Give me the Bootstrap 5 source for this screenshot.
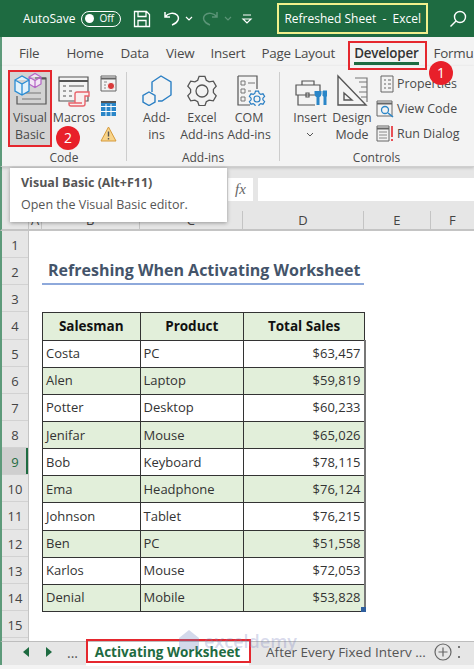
<!DOCTYPE html>
<html lang="en">
<head>
    <meta charset="UTF-8">
    <meta name="viewport" content="width=device-width, initial-scale=1.0">
    <title>Refreshed Sheet - Excel</title>
    <link href="https://cdn.jsdelivr.net/npm/bootstrap@5.3.0/dist/css/bootstrap.min.css" rel="stylesheet">
    <style>
        html, body { margin: 0; height: 669px; overflow: hidden; background: #fff; }
        body { font-family: "Open Sans", "Noto Sans", sans-serif; color: #444; width: 474px; position: relative; }
        .titlebar { height: 37px; background: #1e6b41; color: #fff; font-size: 12px; padding-left: 23px; overflow: hidden; }
        .toggle-off { width: 40px; height: 16px; border: 1.5px solid #fff; border-radius: 9px; font-size: 10px; padding-left: 3px; margin-left: 6px; }
        .toggle-off i { width: 9px; height: 9px; border-radius: 50%; background: #fff; margin-right: 5px; }
        .qat-save { margin-left: 12px; }
        .qat-undo { margin-left: 12px; }
        .doc-name { width: 151px; height: 31px; margin-left: 24px; border: 2px solid #f1f08c; padding-left: 5px; white-space: pre; font-size: 12px; }
        .search-ico { margin-left: 21px; }
        .tabstrip { height: 29px; background: #f3f3f3; font-size: 13.4px; letter-spacing: -.2px; color: #4a4a4a; padding: 3px 0 0 17px; border-left: 2px solid #5d9a7a; position: relative; overflow: hidden; }
        .tabstrip span { white-space: nowrap; }
        .tab-dev { font-weight: 600; color: #333; position: relative; height: 26px; line-height: 26px; }
        .tab-dev::after { content: ""; position: absolute; left: 0; right: 0; bottom: 1px; height: 3px; background: #1e6b41; }
        .ribbon { height: 101px; background: #f3f3f3; border-left: 2px solid #5d9a7a; border-bottom: 1px solid #cfcfcf; box-shadow: 0 1px 3px rgba(0,0,0,.18); font-size: 12.4px; line-height: 17px; color: #4a4a4a; position: relative; z-index: 2; }
        .rib-group { border-right: 1px solid #cdcdcd; margin: 6px 0 5px; padding: 0; }
        .group-code { width: 125px; }
        .group-addins { width: 153px; }
        .group-controls { width: 193px; border-right: 0; }
        .rib-items { flex: 1; min-height: 0; }
        .rib-label { text-align: center; font-size: 12px; line-height: 16px; margin-bottom: -5px; }
        .rib-btn { text-align: center; white-space: nowrap; }
        .rib-btn svg { display: block; margin: 0 auto 2.5px; }
        .btn-vb { width: 40px; margin: -2px 0 0 8px; padding-top: 2px; height: 75px; background: #d3d3d3; }
        .btn-macros { width: 48px; }
        .btn-macros svg { margin-bottom: .5px; }
        .rib-small { width: 20px; margin-left: 2px; gap: 9px; padding-top: 3px; }
        .btn-addins { width: 46px; margin-left: 6px; padding-left: 1px; }
        .btn-excel { width: 46px; }
        .btn-com { width: 47px; padding-left: 1px; }
        .btn-insert { width: 42px; margin-left: 9px; }
        .btn-design { width: 42px; }
        .rib-list { margin-left: 3px; gap: 2px; }
        .rib-list div { height: 23px; white-space: nowrap; }
        .rib-list svg { margin-right: 3px; }
        .formula-bar { height: 44px; background: #e6e6e6; border-left: 2px solid #5d9a7a; padding: 11px 0 0 226px; }
        .fx-box { width: 25px; height: 23px; background: #fff; font-family: "Liberation Serif", serif; font-style: italic; color: #666; font-size: 15px; line-height: 22px; text-align: center; }
        .fx-input { flex: 1; height: 23px; background: #fff; margin-left: 5px; }
        .col-heads { height: 20px; background: #e6e6e6; border-bottom: 2px solid #c4c4c4; border-left: 2px solid #5d9a7a; font-size: 13px; line-height: 18px; }
        .col-heads div { border-right: 1px solid #c4c4c4; text-align: center; }
        .col-corner { width: 27px; }
        .col-a { width: 13px; }
        .col-b { width: 97.5px; }
        .col-c { width: 103.5px; }
        .col-d { width: 121px; }
        .col-e { width: 66.5px; }
        .col-f { flex: 1; border-right: 0 !important; }
        .sheet { height: 410px; border-left: 2px solid #5d9a7a; }
        .row-nums { width: 27px; background: #e6e6e6; border-right: 1px solid #c4c4c4; font-size: 13px; }
        .row-nums div { height: 27.15px; line-height: 27px; text-align: center; border-bottom: 1px solid #d2d2d2; padding-top: 1px; }
        .row-nums .row-active { background: #cfcfcf; color: #1e6b41; box-shadow: inset -2px 0 0 #1e6b41; }
        .sheet-body { flex: 1; padding-left: 13px; }
        .title-row { height: 54.3px; padding-top: 27px; }
        .sheet-title { width: 322px; height: 27.15px; line-height: 25px; padding-left: 6px; margin: 0; font-size: 16px; font-weight: 700; color: #44546a; border-bottom: 2px solid #8ea9db; white-space: nowrap; }
        .spacer-row { height: 27.15px; }
        .sales-table { width: 322px; table-layout: fixed; margin: 0; font-size: 13px; color: #333; --bs-border-color: #333; }
        .sales-table td, .sales-table th { height: 27.15px; padding: 0 3px; line-height: 25px; vertical-align: middle; background: transparent; box-shadow: none; color: #333; }
        .sales-table th { text-align: center; font-size: 13.5px; color: #111; }
        .sales-table .band td, .sales-table .band th { background: #e2efda; }
        .sales-table tbody td:last-child { text-align: right; border-right: 2px solid #777; }
        .sales-table tbody tr:last-child td:last-child { position: relative; }
        .sales-table tbody tr:last-child td:last-child::after { content: ""; position: absolute; right: -2px; bottom: -1px; width: 5px; height: 5px; background: #2f5f9e; }
        .sheet-tabs { height: 24px; background: #e6e6e6; border-top: 1px solid #bdbdbd; border-left: 2px solid #5d9a7a; font-size: 14px; color: #555; padding: 0 0 3px 21px; position: relative; white-space: nowrap; }
        .tab-active { width: 163px; height: 24px; margin-top: 3px; background: #fff; color: #1e6b41; font-weight: 700; text-align: center; line-height: 20px; font-size: 13.5px; margin-left: 8px; }
        .tab-next { margin-left: 17px; width: 160px; overflow: hidden; font-size: 13.5px; }
        .tab-dots { width: 2px; height: 12px; margin-left: 6px; border-top: 2px dotted #777; border-bottom: 2px dotted #777; background: none; }
        .statusbar { height: 4px; background: #f3f3f3; }
        .tip-box { position: absolute; left: 10px; top: 168px; width: 217px; height: 54px; background: #fff; box-shadow: 0 1px 4px rgba(0,0,0,.35); z-index: 5; padding: 6px 11px; font-size: 12.5px; color: #555; }
        .tip-box strong { display: block; line-height: 18px; margin-bottom: 4px; }
        .mark-red { position: absolute; border: 2px solid #e5272e; z-index: 4; }
        .mark-dev { left: 348px; top: 41px; width: 79px; height: 29px; }
        .mark-vb { left: 8px; top: 70px; width: 44px; height: 77px; }
        .mark-tab { left: 86px; top: 639px; width: 165px; height: 24px; }
        .dot-num { position: absolute; width: 24px; height: 24px; border-radius: 50%; background: #e8202a; color: #fff; font-size: 14px; line-height: 24px; text-align: center; z-index: 6; }
        .dot-one { left: 429px; top: 61px; }
        .dot-two { left: 56px; top: 126px; }
        .wm { position: absolute; left: 178px; top: 629px; font-size: 18px; font-weight: 600; color: rgba(120,130,190,.3); z-index: 6; line-height: 22px; }
        .wm svg { margin-right: 4px; vertical-align: -3px; }
    </style>
</head>
<body>
    <!-- Title bar -->
    <div class="titlebar d-flex align-items-center">
        <span>AutoSave</span>
        <div class="toggle-off d-flex align-items-center"><i></i>Off</div>
        <svg class="qat-save" width="18" height="18" viewBox="0 0 18 18" fill="none" stroke="#fff" stroke-width="1.3"><path d="M1.5 1.5h12l3 3v12h-15zM5 1.5v5h8v-5M5 16.5v-6h8v6"/></svg>
        <svg class="qat-undo" width="17" height="17" viewBox="0 0 17 17" fill="none" stroke="#fff" stroke-width="1.5"><path d="M2 2v5h5M2 7c3-4 9-5 12-2s1 8-5 10"/></svg>
        <svg class="ms-1" width="10" height="8" viewBox="0 0 10 8" fill="none" stroke="#fff" stroke-width="1.2"><path d="M2 2l3 3 3-3"/></svg>
        <svg class="ms-2" width="17" height="17" viewBox="0 0 17 17" fill="none" stroke="#5b9477" stroke-width="1.5"><path d="M15 2v5h-5M15 7c-3-4-9-5-12-2s-1 8 5 10"/></svg>
        <svg class="ms-1" width="10" height="8" viewBox="0 0 10 8" fill="none" stroke="#5b9477" stroke-width="1.2"><path d="M2 2l3 3 3-3"/></svg>
        <svg class="ms-2" width="12" height="10" viewBox="0 0 12 10" fill="none" stroke="#fff" stroke-width="1.2"><path d="M2 1h8M2 5l4 4 4-4z"/></svg>
        <div class="doc-name d-flex align-items-center">Refreshed Sheet  -  Excel</div>
        <svg class="search-ico" width="18" height="18" viewBox="0 0 18 18" fill="none" stroke="#fff" stroke-width="1.4"><circle cx="11" cy="7" r="5.5"/><path d="M7 11l-5.5 5.5"/></svg>
    </div>

    <!-- Ribbon tabs -->
    <div class="tabstrip d-flex align-items-center">
        <span>File</span><span style="margin-left:27px">Home</span><span style="margin-left:17px">Data</span><span style="margin-left:17px">View</span><span style="margin-left:16px">Insert</span><span style="margin-left:16px">Page Layout</span><span class="tab-dev" style="margin-left:19px">Developer</span><span style="margin-left:15px">Formu</span>
    </div>

    <!-- Ribbon -->
    <div class="ribbon d-flex">
        <div class="rib-group group-code d-flex flex-column">
            <div class="rib-items d-flex">
                <div class="rib-btn btn-vb">
                    <svg width="34" height="34" viewBox="0 0 34 34" fill="none"><path d="M22 6h11v26H4v-8" stroke="#555" stroke-width="1.2"/><path d="M26 6.5h7" stroke="#555" stroke-width="2"/><path d="M10 21h18M9 27h19" stroke="#777" stroke-width="1.2"/><path d="M16 5l6-3.5L28 5v7l-6 3.5-6-3.5zM16 5l6 3.5L28 5M22 8.5v7" stroke="#b565c6" stroke-width="1.2" fill="#f3e6f5"/><path d="M2 8l7-4 7 4v11l-7 4-7-4zM2 8l7 4 7-4M9 12v11" stroke="#2a8dd4" stroke-width="1.3" fill="#e3f1fa"/></svg>
                    Visual<br>Basic
                </div>
                <div class="rib-btn btn-macros">
                    <svg width="36" height="36" viewBox="0 0 36 36" fill="none"><path d="M3 5h29v24H3z" stroke="#555" stroke-width="1.2"/><path d="M3 9h29" stroke="#555" stroke-width="2"/><path d="M7 14h3M13 14h15M7 19h3M13 19h3M7 24h3M13 24h3" stroke="#888" stroke-width="1.3"/><path d="M19 31V22a2 2 0 0 1 2-2h12v4h-4v8a2 2 0 0 1-2 2H15a2 2 0 0 1-2-2v-1h13" stroke="#e8636b" stroke-width="1.4" fill="#f8eeee"/></svg>
                    Macros
                </div>
                <div class="rib-small d-flex flex-column">
                    <svg width="17" height="17" viewBox="0 0 17 17" fill="none"><path d="M1 1h15v15H1z" stroke="#666"/><path d="M1 3.5h15" stroke="#666" stroke-width="2"/><circle cx="11" cy="11" r="3.6" fill="#d93a3a" stroke="#f3f3f3"/><path d="M4 7h3M4 10h2M4 13h2" stroke="#888"/></svg>
                    <svg width="17" height="16" viewBox="0 0 17 16"><path fill="#2a86c8" d="M1 1h15v14H1z"/><path d="M1 1h15" stroke="#555" stroke-width="2"/><path d="M1 5.5h15M1 10.5h15M6 3v12M11 3v12" stroke="#fff"/></svg>
                    <svg width="17" height="16" viewBox="0 0 17 16"><path d="M8.5 1l7.5 14H1z" fill="#f8d48a" stroke="#d69a3a"/><path d="M8.5 5.5v5M8.5 12v1.5" stroke="#555" stroke-width="1.4"/></svg>
                </div>
            </div>
            <div class="rib-label">Code</div>
        </div>
        <div class="rib-group group-addins d-flex flex-column">
            <div class="rib-items d-flex">
                <div class="rib-btn btn-addins">
                    <svg width="34" height="34" viewBox="0 0 34 34" fill="none" stroke="#2a7fc4" stroke-width="1.4"><path d="M12 20V10l9-6 10 6v13l-9 6H18"/><path d="M9 20l6 3.5V30l-6 3.5L3 30v-6.5z"/></svg>
                    Add-<br>ins
                </div>
                <div class="rib-btn btn-excel">
                    <svg width="34" height="34" viewBox="0 0 34 34" fill="none" stroke="#555" stroke-width="1.3"><path id="gearBig"/><circle cx="17" cy="19" r="6"/></svg>
                    Excel<br>Add-ins
                </div>
                <div class="rib-btn btn-com">
                    <svg width="34" height="34" viewBox="0 0 34 34" fill="none"><path d="M6 4h19v13M6 4v29h12" stroke="#555" stroke-width="1.2"/><path d="M9 9h4v4H9zM9 17h4v4H9zM9 25h4v4H9zM16 11h7M16 19h3" stroke="#777"/><path id="gearSmall" stroke="#2a7fc4" stroke-width="1.2"/><circle cx="25" cy="27" r="3" stroke="#2a7fc4" stroke-width="1.2"/></svg>
                    COM<br>Add-ins
                </div>
            </div>
            <div class="rib-label">Add-ins</div>
        </div>
        <div class="rib-group group-controls d-flex flex-column">
            <div class="rib-items d-flex">
                <div class="rib-btn btn-insert">
                    <svg width="34" height="34" viewBox="0 0 34 34" fill="none"><path d="M3 13h24v10H3zM5 23v10h17M9 13V9h12v4M13 21v4h3v-4z" stroke="#555" stroke-width="1.2"/><path d="M25 33V24M32 33V24" stroke="#2a86c8" stroke-width="3"/><path d="M22 19v3a3 3 0 0 0 6 0v-3M30 19h4v5h-4z" fill="#2a86c8" stroke="#2a86c8"/></svg>
                    Insert<br><svg style="display:inline;margin:0" width="8" height="6" viewBox="0 0 8 6" fill="none" stroke="#555"><path d="M1 1l3 3 3-3"/></svg>
                </div>
                <div class="rib-btn btn-design">
                    <svg width="34" height="34" viewBox="0 0 34 34" fill="none" stroke="#555" stroke-width="1.4"><path d="M20 6h12v24M24 10h8M26 15h6M24 20h8M26 25h6" stroke="#777" stroke-width="1.2"/><path d="M3 4l28 29H3zM9 21l8 7H9z"/></svg>
                    Design<br>Mode
                </div>
                <div class="rib-list d-flex flex-column">
                    <div class="d-flex align-items-center"><svg class="ms-1" width="14" height="18" viewBox="0 0 14 18" fill="none" stroke="#666"><path d="M1 1h12v16H1zM4 5h2M8 5h3M4 9h2M8 9h3M4 13h2M8 13h3"/></svg>Properties</div>
                    <div class="d-flex align-items-center"><svg width="18" height="18" viewBox="0 0 18 18" fill="none"><path d="M1 1h15v15H1z" stroke="#666"/><path d="M1 3.5h15" stroke="#666" stroke-width="2"/><circle cx="9" cy="10" r="3.5" stroke="#2a86c8" stroke-width="1.3"/><path d="M12 13l5 4" stroke="#2a86c8" stroke-width="1.6"/></svg>View Code</div>
                    <div class="d-flex align-items-center"><svg width="18" height="18" viewBox="0 0 18 18" fill="none"><path d="M1 1h12v15H1z" stroke="#666"/><path d="M1 3.5h12" stroke="#666" stroke-width="2"/><path d="M3 7h8M3 10h8M3 13h8" stroke="#888"/><path d="M16 1v11M16 14v2" stroke="#e5272e" stroke-width="1.6"/></svg>Run Dialog</div>
                </div>
            </div>
            <div class="rib-label">Controls</div>
        </div>
    </div>

    <!-- Formula bar -->
    <div class="formula-bar d-flex">
        <div class="fx-box">fx</div>
        <div class="fx-input"></div>
    </div>

    <!-- Column headers -->
    <div class="col-heads d-flex">
        <div class="col-corner"></div>
        <div class="col-a">A</div>
        <div class="col-b">B</div>
        <div class="col-c">C</div>
        <div class="col-d">D</div>
        <div class="col-e">E</div>
        <div class="col-f">F</div>
    </div>

    <!-- Sheet -->
    <div class="sheet d-flex">
        <div class="row-nums" id="rowNums"></div>
        <div class="sheet-body">
            <div class="title-row"><h1 class="sheet-title">Refreshing When Activating Worksheet</h1></div>
            <div class="spacer-row"></div>
            <table class="table table-bordered sales-table">
                <colgroup><col style="width:97.5px"><col style="width:103.5px"><col style="width:121px"></colgroup>
                <thead><tr class="band"><th>Salesman</th><th>Product</th><th>Total Sales</th></tr></thead>
                <tbody id="salesRows"></tbody>
            </table>
        </div>
    </div>

    <!-- Sheet tabs -->
    <div class="sheet-tabs d-flex align-items-center">
        <svg width="6" height="10" viewBox="0 0 6 10"><path d="M6 0v10L0 5z" fill="#1e6b41"/></svg>
        <svg style="margin-left:17px" width="6" height="10" viewBox="0 0 6 10"><path d="M0 0v10l6-5z" fill="#1e6b41"/></svg>
        <span style="margin-left:15px">...</span>
        <div class="tab-active">Activating Worksheet</div>
        <div class="tab-next">After Every Fixed Interv ...</div>
        <svg class="ms-2" width="18" height="18" viewBox="0 0 18 18" fill="none" stroke="#666" stroke-width="1.2"><circle cx="9" cy="9" r="8"/><path d="M9 4.5v9M4.5 9h9"/></svg>
        <div class="tab-dots"></div>
    </div>
    <div class="statusbar"></div>

    <!-- Overlays -->
    <div class="tip-box"><strong>Visual Basic (Alt+F11)</strong>Open the Visual Basic editor.</div>
    <div class="mark-red mark-dev"></div>
    <div class="mark-red mark-vb"></div>
    <div class="mark-red mark-tab"></div>
    <div class="dot-num dot-one">1</div>
    <div class="dot-num dot-two">2</div>
    <div class="wm"><svg width="22" height="22" viewBox="0 0 22 22"><path d="M11 1L1 9v12h20V9z" fill="rgba(110,130,190,.3)"/></svg>exceldemy</div>

    <script>
        const sales = [
            ["Costa", "PC", "$63,457"],
            ["Alen", "Laptop", "$59,819"],
            ["Potter", "Desktop", "$60,233"],
            ["Jenifar", "Mouse", "$65,026"],
            ["Bob", "Keyboard", "$78,115"],
            ["Ema", "Headphone", "$76,124"],
            ["Johnson", "Tablet", "$76,215"],
            ["Ben", "PC", "$51,558"],
            ["Karlos", "Mouse", "$72,053"],
            ["Denial", "Mobile", "$53,828"]
        ];
        document.getElementById("salesRows").innerHTML = sales.map((r, i) =>
            `<tr class="${i % 2 ? "band" : ""}"><td>${r[0]}</td><td>${r[1]}</td><td>${r[2]}</td></tr>`).join("");
        let nums = "";
        for (let n = 1; n <= 15; n++) nums += `<div class="${n === 9 ? "row-active" : ""}">${n}</div>`;
        document.getElementById("rowNums").innerHTML = nums;

        // six-toothed gear outline
        function gearPath(cx, cy, outer, inner) {
            const pts = [];
            for (let k = 0; k < 6; k++) {
                const t = 90 + k * 60;
                [[-22, inner], [-11, outer], [11, outer], [22, inner]].forEach(p => {
                    const a = (t + p[0]) * Math.PI / 180;
                    pts.push((cx + p[1] * Math.cos(a)).toFixed(1) + " " + (cy - p[1] * Math.sin(a)).toFixed(1));
                });
            }
            return "M" + pts.join("L") + "z";
        }
        document.getElementById("gearBig").setAttribute("d", gearPath(17, 19, 15, 11.5));
        document.getElementById("gearSmall").setAttribute("d", gearPath(25, 27, 8, 6));
    </script>
    <script src="https://cdn.jsdelivr.net/npm/bootstrap@5.3.0/dist/js/bootstrap.bundle.min.js"></script>
</body>
</html>
